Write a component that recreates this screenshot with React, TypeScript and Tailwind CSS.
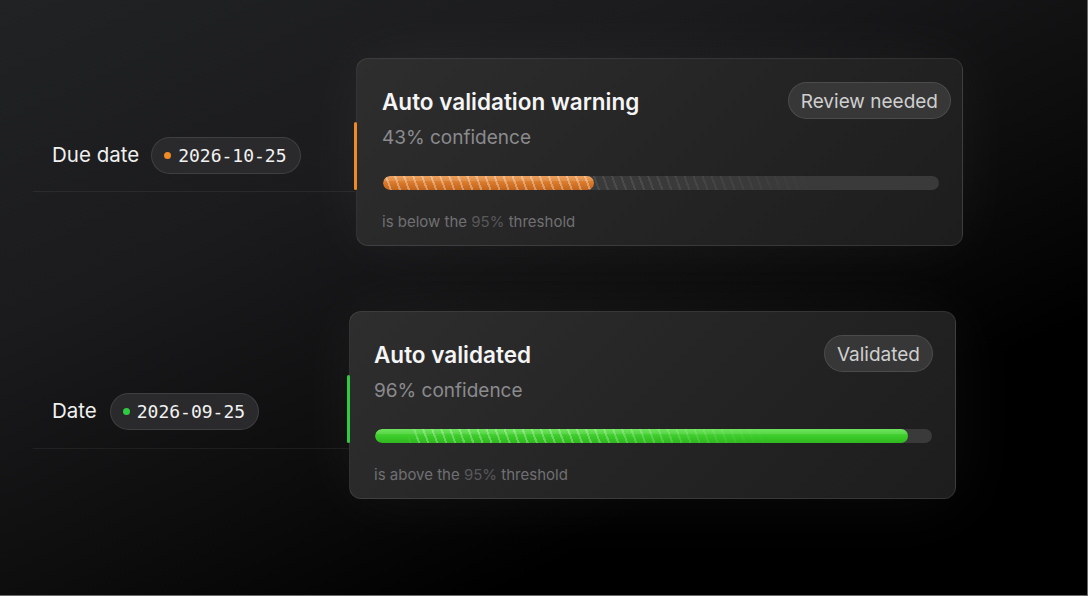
import React from "react"

type Tone = "orange" | "green"

const stripes =
  "bg-[repeating-linear-gradient(70deg,transparent_0px,transparent_6.5px,rgba(255,255,255,0.45)_6.5px,rgba(255,255,255,0.45)_8.5px)]"

function DatePill({ tone, value }: { tone: Tone; value: string }) {
  return (
    <div className="flex h-[37px] items-center gap-[7px] rounded-full border border-white/10 bg-[#2a2a2c] pl-[12px] pr-[13px]">
      <span className={`h-[7px] w-[7px] rounded-full ${tone === "orange" ? "bg-[#f08a24]" : "bg-[#2ecc40]"}`} />
      <span className="font-['DejaVu_Sans_Mono',monospace] text-[18px] text-[#f2f2f2]">{value}</span>
    </div>
  )
}

function Progress({ tone, pct }: { tone: Tone; pct: number }) {
  const fill =
    tone === "orange"
      ? "bg-[linear-gradient(180deg,#e9954a_0%,#d8782a_50%,#c2651c_100%)]"
      : "bg-[linear-gradient(180deg,#5ee04a_0%,#3ccc2a_50%,#2fb81f_100%)]"
  return (
    <div className="relative h-[14px] overflow-hidden rounded-full bg-[#3a3a3b]">
      {tone === "orange" && (
        <div className={`absolute inset-0 opacity-20 ${stripes} [mask-image:linear-gradient(90deg,black_0%,black_45%,transparent_80%)]`} />
      )}
      <div className={`relative h-full overflow-hidden rounded-full ${fill}`} style={{ width: `${pct}%` }}>
        <div
          className={`absolute inset-0 ${stripes} ${
            tone === "orange"
              ? "opacity-70"
              : "opacity-60 [mask-image:linear-gradient(90deg,transparent_0%,transparent_6%,black_8%,black_40%,transparent_75%)]"
          }`}
        />
        <div className="absolute inset-x-0 top-0 h-[5px] bg-white/10" />
      </div>
    </div>
  )
}

function Card({
  tone,
  title,
  confidence,
  badge,
  pct,
  word,
  padL,
  barL,
  badgeR,
}: {
  tone: Tone
  title: string
  confidence: string
  badge: string
  pct: number
  word: string
  padL: string
  barL: string
  badgeR: string
}) {
  return (
    <div className="relative h-[188px] w-[607px] shrink-0 rounded-[12px] border border-white/[0.09] bg-[linear-gradient(135deg,#2e2e2f_0%,#252526_50%,#1d1d1e_100%)] shadow-[0_0_70px_rgba(255,255,255,0.05)]">
      <div
        className={`absolute left-[-3px] top-[63px] h-[68px] w-[3px] rounded-full ${
          tone === "orange" ? "bg-[#f08a24]" : "bg-[#2ecc40]"
        }`}
      />
      <div className={`flex items-start justify-between pt-[23px] ${padL} ${badgeR}`}>
        <div className="mt-[6px] flex flex-col gap-[10px]">
          <div className="text-[22.5px] font-semibold leading-[28px] text-[#f5f5f5]">{title}</div>
          <div className="text-[19px] leading-[24px] text-[#8b8b8d]">{confidence}</div>
        </div>
        <div className="flex h-[37px] items-center rounded-full border border-white/10 bg-[#373738] px-[12px] pt-[3px] text-[19px] text-[#cfcfcf]">
          {badge}
        </div>
      </div>
      <div className={`mt-[26px] mr-[23px] ${barL}`}>
        <Progress tone={tone} pct={pct} />
      </div>
      <div className={`mt-[22px] text-[15px] leading-[20px] text-[#707072] ${padL}`}>
        is {word} the <span className="text-[#58585a]">95%</span> threshold
      </div>
    </div>
  )
}

export default function App() {
  return (
    <div className="h-[596px] w-[1088px] overflow-hidden border-b border-r border-[#6a6a6a] bg-[linear-gradient(155deg,#212224_0%,#1b1b1d_30%,#0d0d0e_55%,#000000_75%)] font-['Inter',sans-serif]">
      <div className="flex flex-col pt-[58px]">
        <div className="flex items-start">
          <div className="ml-[33px] w-[322px] border-b border-white/[0.06] pt-[79px] pb-[17px]">
            <div className="flex items-center gap-[12px] pl-[19px]">
              <span className="text-[20.5px] text-[#f0f0f0]">Due date</span>
              <DatePill tone="orange" value="2026-10-25" />
            </div>
          </div>
          <div className="ml-[1px]">
            <Card
              tone="orange"
              title="Auto validation warning"
              confidence="43% confidence"
              badge="Review needed"
              pct={38}
              word="below"
              padL="pl-[25px]"
              barL="ml-[26px]"
              badgeR="pr-[11px]"
            />
          </div>
        </div>

        <div className="mt-[65px] flex items-start">
          <div className="ml-[33px] w-[316px] border-b border-white/[0.06] pt-[82px] pb-[18px]">
            <div className="flex items-center gap-[13px] pl-[19px]">
              <span className="text-[20.5px] text-[#f0f0f0]">Date</span>
              <DatePill tone="green" value="2026-09-25" />
            </div>
          </div>
          <Card
            tone="green"
            title="Auto validated"
            confidence="96% confidence"
            badge="Validated"
            pct={95.7}
            word="above"
            padL="pl-[24px]"
            barL="ml-[25px]"
            badgeR="pr-[22px]"
          />
        </div>
      </div>
    </div>
  )
}
